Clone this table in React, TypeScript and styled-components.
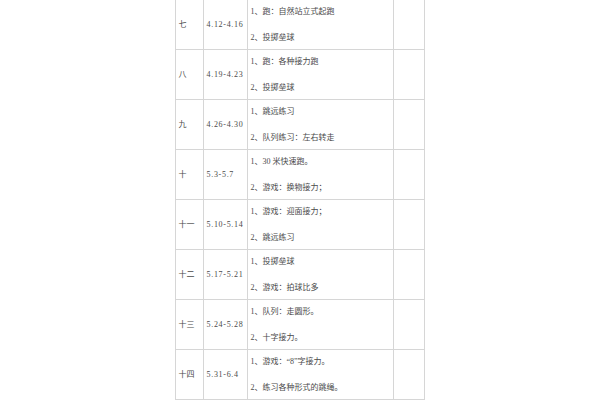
import React from 'react';
import styled, { createGlobalStyle } from 'styled-components';

const GlobalStyle = createGlobalStyle`
  html, body {
    margin: 0;
    padding: 0;
    background: #fff;
  }
  body {
    font-family: "Liberation Serif", "Noto Sans CJK SC", serif;
    color: #4a4a4a;
  }
`;

const Page = styled.div`
  width: 600px;
  height: 400px;
  overflow: hidden;
  display: flex;
  justify-content: center;
`;

const Sheet = styled.div`
  width: 250px;
  display: grid;
  grid-template-columns: 28px 44px 146px 31px;
  grid-auto-rows: 50px;
  border-left: 1px solid #d6d6d6;
  align-content: start;
`;

const Cell = styled.div`
  box-sizing: border-box;
  border-right: 1px solid #d6d6d6;
  border-bottom: 1px solid #d6d6d6;
  font-size: 8px;
  line-height: 12px;
  white-space: nowrap;
  overflow: hidden;
`;

const WeekCell = styled(Cell)`
  display: flex;
  align-items: center;
  padding-left: 3px;
`;

const DateCell = styled(Cell)`
  display: flex;
  align-items: center;
  padding-left: 3px;
  letter-spacing: 0.7px;
`;

const TaskCell = styled(Cell)`
  display: flex;
  flex-direction: column;
  justify-content: space-between;
  padding: 6px 2px 5px 3px;
`;

const Task = styled.span`
  display: block;
`;

type Week = { no: string; dates: string; tasks: [string, string] };

const weeks: Week[] = [
  { no: '七', dates: '4.12-4.16', tasks: ['1、跑：自然站立式起跑', '2、投掷垒球'] },
  { no: '八', dates: '4.19-4.23', tasks: ['1、跑：各种接力跑', '2、投掷垒球'] },
  { no: '九', dates: '4.26-4.30', tasks: ['1、跳远练习', '2、队列练习：左右转走'] },
  { no: '十', dates: '5.3-5.7', tasks: ['1、30 米快速跑。', '2、游戏：换物接力；'] },
  { no: '十一', dates: '5.10-5.14', tasks: ['1、游戏：迎面接力；', '2、跳远练习'] },
  { no: '十二', dates: '5.17-5.21', tasks: ['1、投掷垒球', '2、游戏：拍球比多'] },
  { no: '十三', dates: '5.24-5.28', tasks: ['1、队列：走圆形。', '2、十字接力。'] },
  { no: '十四', dates: '5.31-6.4', tasks: ['1、游戏：“8”字接力。', '2、练习各种形式的跳绳。'] },
];

export default function App() {
  return (
    <>
      <GlobalStyle />
      <Page>
        <Sheet>
          {weeks.map((w) => (
            <React.Fragment key={w.no}>
              <WeekCell>{w.no}</WeekCell>
              <DateCell>{w.dates}</DateCell>
              <TaskCell>
                <Task>{w.tasks[0]}</Task>
                <Task>{w.tasks[1]}</Task>
              </TaskCell>
              <Cell />
            </React.Fragment>
          ))}
        </Sheet>
      </Page>
    </>
  );
}
